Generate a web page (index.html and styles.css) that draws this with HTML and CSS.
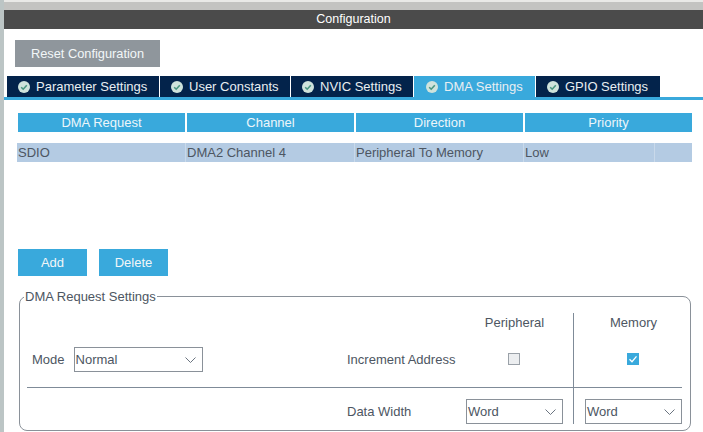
FILE: index.html
```html
<!DOCTYPE html>
<html lang="en">
<head>
    <meta charset="UTF-8">
    <title>Configuration</title>
    <link rel="stylesheet" href="styles.css">
</head>
<body>
<div class="page">
    <div class="top-strip"></div>
    <div class="title-bar">Configuration</div>

    <button class="btn btn-reset">Reset Configuration</button>

    <div class="tabs">
        <div class="tab">
            <svg class="tab-icon" viewBox="0 0 12 12"><circle cx="6" cy="6" r="6"/><path d="M3.2 6.2 5.2 8.2 8.8 4.2"/></svg>
            Parameter Settings
        </div>
        <div class="tab">
            <svg class="tab-icon" viewBox="0 0 12 12"><circle cx="6" cy="6" r="6"/><path d="M3.2 6.2 5.2 8.2 8.8 4.2"/></svg>
            User Constants
        </div>
        <div class="tab">
            <svg class="tab-icon" viewBox="0 0 12 12"><circle cx="6" cy="6" r="6"/><path d="M3.2 6.2 5.2 8.2 8.8 4.2"/></svg>
            NVIC Settings
        </div>
        <div class="tab tab-active">
            <svg class="tab-icon" viewBox="0 0 12 12"><circle cx="6" cy="6" r="6"/><path d="M3.2 6.2 5.2 8.2 8.8 4.2"/></svg>
            DMA Settings
        </div>
        <div class="tab">
            <svg class="tab-icon" viewBox="0 0 12 12"><circle cx="6" cy="6" r="6"/><path d="M3.2 6.2 5.2 8.2 8.8 4.2"/></svg>
            GPIO Settings
        </div>
    </div>

    <div class="table-head">
        <div>DMA Request</div>
        <div>Channel</div>
        <div>Direction</div>
        <div>Priority</div>
    </div>
    <div class="table-row">
        <div>SDIO</div>
        <div>DMA2 Channel 4</div>
        <div>Peripheral To Memory</div>
        <div>Low</div>
        <div></div>
    </div>

    <div class="actions">
        <button class="btn btn-blue">Add</button>
        <button class="btn btn-blue">Delete</button>
    </div>

    <fieldset class="settings">
        <legend>DMA Request Settings</legend>
        <div class="settings-grid">
            <div class="col-head col-periph">Peripheral</div>
            <div class="col-head col-mem">Memory</div>
            <div class="divider"></div>

            <div class="mode">
                <span>Mode</span>
                <div class="select select-mode">Normal
                    <svg class="chevron" viewBox="0 0 11 6"><path d="M.5.5 5.5 5.5 10.5.5"/></svg>
                </div>
            </div>
            <div class="row-label row-inc">Increment Address</div>
            <div class="check-cell col-periph row-inc"><span class="check"></span></div>
            <div class="check-cell col-mem row-inc">
                <span class="check check-on"><svg viewBox="0 0 12 12"><path d="M2.5 6.2 5 8.7 9.5 3.4"/></svg></span>
            </div>

            <div class="rule"></div>

            <div class="row-label row-width">Data Width</div>
            <div class="select col-periph row-width">Word
                <svg class="chevron" viewBox="0 0 11 6"><path d="M.5.5 5.5 5.5 10.5.5"/></svg>
            </div>
            <div class="select col-mem row-width">Word
                <svg class="chevron" viewBox="0 0 11 6"><path d="M.5.5 5.5 5.5 10.5.5"/></svg>
            </div>
        </div>
    </fieldset>
</div>
</body>
</html>
```

FILE: styles.css
```css
*{margin: 0; padding: 0; box-sizing: border-box;}
html,body{
    height: 100%;
    overflow: hidden;
    background: #fff;
}
body{
    font-family: "Liberation Sans", Arial, sans-serif;
    font-size: 13px;
    color: #4d5662;
}
.page{
    height: 432px;
    border-left: 4px solid #bcc5c5;
    display: flex;
    flex-direction: column;
    align-items: flex-start;
}
.top-strip{
    width: 100%;
    height: 10px;
    background: #c3c3c1;
    border-top: 2px solid #e9e9e7;
}
.title-bar{
    width: 100%;
    height: 19px;
    line-height: 18px;
    background: #4b4b4b;
    color: #fff;
    font-size: 12.5px;
    text-align: center;
}
.btn{
    border: 0;
    color: #f2f6f8;
    font-family: inherit;
    font-size: 13px;
}
.btn-reset{
    width: 145px;
    height: 27px;
    margin: 11px 0 0 11px;
    background: #8f969c;
    font-size: 12.8px;
}

/* tabs */
.tabs{
    width: 100%;
    height: 24px;
    margin-top: 9px;
    padding-left: 3px;
    display: grid;
    grid-template-columns: 152px 130px 122px 121px 124px;
    gap: 1px;
    border-bottom: 3px solid #39a9dc;
}
.tab{
    height: 21px;
    padding-left: 11px;
    display: flex;
    align-items: center;
    gap: 6px;
    background: #03234b;
    color: #e8eef2;
    white-space: nowrap;
}
.tab-active{
    background: #39a9dc;
    padding-left: 12px;
}
.tab-icon{
    width: 12px;
    height: 12px;
    flex: none;
}
.tab-icon circle{
    fill: #cfe3dc;
}
.tab-icon path{
    fill: none;
    stroke: #4a9680;
    stroke-width: 1.6;
}

/* dma table */
.table-head{
    display: grid;
    grid-template-columns: repeat(4, 167px);
    gap: 2px;
    margin: 13px 0 0 14px;
}
.table-head div{
    height: 19px;
    line-height: 19px;
    background: #39a9dc;
    color: #edf6fa;
    text-align: center;
}
.table-row{
    display: grid;
    grid-template-columns: 169px 169px 169px 131px 37px;
    margin: 11px 0 0 13px;
    background: #b4cbe3;
}
.table-row div{
    height: 19px;
    line-height: 19px;
    padding-left: 1px;
    border-right: 1px solid #c9d9ea;
    white-space: nowrap;
}
.table-row div:last-child{
    border-right: 0;
}

.actions{
    display: flex;
    gap: 12px;
    margin: 87px 0 0 14px;
}
.btn-blue{
    width: 69px;
    height: 27px;
    background: #39a9dc;
}

/* request settings box */
.settings{
    width: 672px;
    margin: 13px 0 0 15px;
    border: 1px solid #8a9199;
    border-radius: 8px;
    padding: 9px 8px 6px 7px;
}
.settings legend{
    margin-left: -3px;
    padding: 0 1px;
    line-height: 15px;
}
.settings-grid{
    display: grid;
    grid-template-columns: 320px 119px 97px 22px 97px;
    grid-template-rows: 34px 25px 15px 1px 11px 25px;
}
.col-periph{
    grid-column: 3;
}
.col-mem{
    grid-column: 5;
}
.row-inc{
    grid-row: 2;
}
.row-width{
    grid-row: 6;
}
.col-head{
    grid-row: 1;
    padding-top: 2px;
    text-align: center;
}
.divider{
    grid-column: 4;
    grid-row: 1 / -1;
    justify-self: start;
    margin-left: 10px;
    width: 1px;
    background: #7f8b98;
}
.mode{
    grid-column: 1;
    grid-row: 2;
    padding-left: 5px;
    display: flex;
    align-items: center;
    gap: 9px;
}
.row-label{
    grid-column: 2;
    line-height: 25px;
}
.rule{
    grid-column: 1 / -1;
    grid-row: 4;
    background: #7f8b98;
}
.select{
    position: relative;
    height: 25px;
    line-height: 23px;
    padding-left: 1px;
    border: 1px solid #8a9199;
}
.select-mode{
    width: 129px;
}
.chevron{
    position: absolute;
    top: 9px;
    right: 6px;
    width: 11px;
    height: 6px;
    fill: none;
    stroke: #6b7480;
}
.check-cell{
    display: flex;
    align-items: center;
    justify-content: center;
}
.check{
    width: 12px;
    height: 12px;
    margin: 0 1px 1px 0;
    background: #eceef0;
    border: 1px solid #9aa1a8;
}
.check-on{
    background: #39a9dc;
    border: 0;
}
.check-on svg{
    display: block;
    width: 12px;
    height: 12px;
    fill: none;
    stroke: #fff;
    stroke-width: 1.3;
}
```
